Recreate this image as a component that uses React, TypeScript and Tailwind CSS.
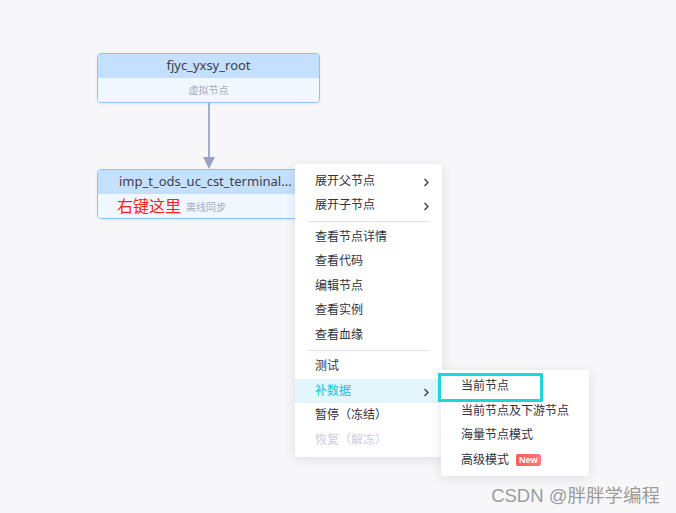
import { ReactNode } from "react";

const font = "font-['Noto_Sans','Noto_Sans_CJK_SC',sans-serif]";

const Chevron = () => (
  <svg width="7" height="9" viewBox="0 0 7 9" className="text-[#3a3d4a] mt-[3px]">
    <path d="M1.5 1 L5 4.5 L1.5 8" fill="none" stroke="currentColor" strokeWidth="1.4" />
  </svg>
);

type Item = { label: string; sub?: boolean; active?: boolean; disabled?: boolean };

const groups: Item[][] = [
  [
    { label: "展开父节点", sub: true },
    { label: "展开子节点", sub: true },
  ],
  [
    { label: "查看节点详情" },
    { label: "查看代码" },
    { label: "编辑节点" },
    { label: "查看实例" },
    { label: "查看血缘" },
  ],
  [
    { label: "测试" },
    { label: "补数据", sub: true, active: true },
    { label: "暂停（冻结）" },
    { label: "恢复（解冻）", disabled: true },
  ],
];

const MenuRow = ({ item }: { item: Item }) => (
  <div
    className={
      "h-[24.5px] flex items-center justify-between pl-[20px] pr-[12px] text-[12px] " +
      (item.active
        ? "bg-[#e3f6fb] text-[#20c0dc]"
        : item.disabled
        ? "text-[#c9cee0]"
        : "text-[#2f3140]")
    }
  >
    <span>{item.label}</span>
    {item.sub && <Chevron />}
  </div>
);

const Node = ({ title, children, left }: { title: string; children: ReactNode; left?: boolean }) => (
  <div className="w-[223px] h-[50px] border-[1.5px] border-[#8ec2f8] rounded-[4px] overflow-hidden flex flex-col shadow-[0_1px_3px_rgba(80,130,200,0.12)]">
    <div
      className={
        "h-[24px] bg-[#c4e0fd] flex items-center text-[13px] text-[#3a3e50] whitespace-nowrap overflow-hidden " +
        (left ? "pl-[21px]" : "justify-center")
      }
    >
      {title}
    </div>
    <div className="flex-1 bg-[#f0f7ff] flex items-center">{children}</div>
  </div>
);

export default function App() {
  return (
    <div className={"relative w-[676px] h-[513px] overflow-hidden bg-[#f7f7f9] " + font}>
      {/* diagram */}
      <div className="absolute left-[97px] top-[53px]">
        <Node title="fjyc_yxsy_root">
          <span className="w-full text-center text-[10px] text-[#a4aabb]">虚拟节点</span>
        </Node>
      </div>

      <div className="absolute left-[208px] top-[103px] w-[1.5px] h-[55px] bg-[#a6abc8]" />
      <svg className="absolute left-[203px] top-[157px]" width="12" height="12" viewBox="0 0 12 12">
        <path d="M0 0 L12 0 L6 12 Z" fill="#9aa0bf" />
      </svg>

      <div className="absolute left-[97px] top-[169px]">
        <Node title="imp_t_ods_uc_cst_terminal..." left>
          <div className="flex items-center pl-[19px] gap-[5px]">
            <span className="text-[16px] text-[#ff2020] leading-none">右键这里</span>
            <span className="text-[10px] text-[#a4aabb] mt-[3px]">离线同步</span>
          </div>
        </Node>
      </div>

      {/* context menu */}
      <div className="absolute left-[295px] top-[164px] w-[147px] bg-white rounded-[3px] pt-[4.5px] pb-[5px] shadow-[0_2px_12px_rgba(40,50,80,0.12)]">
        {groups.map((g, gi) => (
          <div key={gi}>
            {gi > 0 && <div className="mx-[12px] my-[3px] h-px bg-[#e2e3ef]" />}
            {g.map((it) => (
              <MenuRow key={it.label} item={it} />
            ))}
          </div>
        ))}
      </div>

      {/* submenu */}
      <div className="absolute left-[441px] top-[370px] w-[148px] bg-white rounded-[3px] pt-[4px] pb-[4px] shadow-[0_2px_12px_rgba(40,50,80,0.12)] text-[12px] text-[#2f3140]">
        <div className="h-[24.5px] flex items-center pl-[20px]">当前节点</div>
        <div className="h-[24.5px] flex items-center pl-[20px]">当前节点及下游节点</div>
        <div className="h-[24.5px] flex items-center pl-[20px]">海量节点模式</div>
        <div className="h-[24.5px] flex items-center pl-[20px] gap-[7px]">
          <span>高级模式</span>
          <span className="h-[12px] px-[3px] rounded-[2px] bg-gradient-to-r from-[#ff5a5a] to-[#ff7a7a] text-white text-[9px] font-bold leading-[12px] font-['Liberation_Sans',sans-serif]">
            New
          </span>
        </div>
      </div>

      {/* annotation box */}
      <div className="absolute left-[438px] top-[373px] w-[105px] h-[29px] border-[3px] border-[#1ed6d8]" />

      {/* watermark */}
      <div className="absolute right-[16px] top-[482px] text-[18.5px] text-[#9c9c9c] font-['Liberation_Sans','Noto_Sans_CJK_SC',sans-serif] whitespace-nowrap">
        CSDN @胖胖学编程
      </div>
    </div>
  );
}
